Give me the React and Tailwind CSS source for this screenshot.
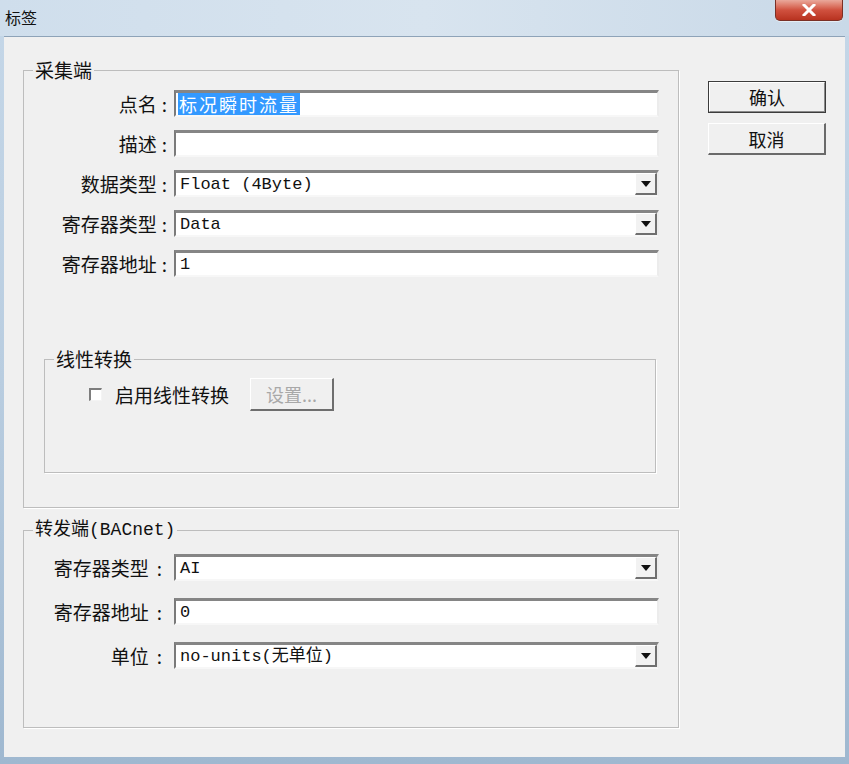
import React from "react";

const CJK = { fontFamily: '"Noto Sans CJK SC", "Noto Sans", sans-serif' };
const MONO = { fontFamily: '"Liberation Mono", "Noto Sans CJK SC", monospace' };

// label text with a detached colon, like the dialog font renders it
function Label({ text, width, colonGap, pr }) {
  return (
    <div className="text-[19px] text-right text-[#111] leading-none shrink-0" style={{ ...CJK, width, paddingRight: pr }}>
      {text}
      <span style={{ marginLeft: colonGap }}>:</span>
    </div>
  );
}

function TextBox({ children }) {
  return (
    <div className="flex-1 h-[27px] bg-white border-2 border-t-[3px] border-t-[#858585] border-l-[#7a7a7a] border-b-[#f7f7f7] border-r-[#ececec] flex items-center pl-[2px] overflow-hidden">
      {children}
    </div>
  );
}

function ComboBox({ value }) {
  return (
    <div className="flex-1 h-[27px] bg-white border-2 border-t-[3px] border-t-[#858585] border-l-[#7a7a7a] border-b-[#f7f7f7] border-r-[#ececec] flex items-stretch">
      <div className="flex-1 flex items-center pl-[4px] text-[17px] text-[#111] leading-none" style={MONO}>
        {value}
      </div>
      <div className="w-[22px] bg-[#f2f2f2] border-t border-l border-[#ffffff] border-r-2 border-b-2 border-r-[#6f6f6f] border-b-[#6f6f6f] flex items-center justify-center">
        <svg width="10" height="6" viewBox="0 0 10 6">
          <path d="M0 0 L10 0 L5 6 Z" fill="#111" />
        </svg>
      </div>
    </div>
  );
}

function GroupBox({ title, className, children, titleStyle = CJK, titleSize = "text-[19px]" }) {
  return (
    <fieldset className={`border border-[#bdbdbd] shadow-[1px_1px_0_#ffffff] ${className}`}>
      <legend className={`ml-[9px] px-[2px] ${titleSize} leading-[18px] text-[#111]`} style={titleStyle}>
        {title}
      </legend>
      {children}
    </fieldset>
  );
}

function Row({ label, labelWidth, gap, colonGap, pr, children }) {
  return (
    <div className="flex items-center h-[27px]" style={{ gap }}>
      <Label text={label} width={labelWidth} colonGap={colonGap} pr={pr} />
      {children}
    </div>
  );
}

export default function App() {
  return (
    <div className="w-[849px] h-[764px] overflow-hidden bg-gradient-to-b from-[#c5d7e8] via-[#b9cde0] to-[#9fb8d0] flex flex-col">
      {/* title bar */}
      <div className="h-[36px] flex justify-between shrink-0 bg-gradient-to-r from-[#cfdeec] via-[#d8e4ef] to-[#c9d9e8]">
        <div className="pl-[5px] pt-[8px] text-[16px] leading-[18px] text-[#111]" style={CJK}>
          标签
        </div>
        <div className="mr-[6px] w-[68px] h-[21px] rounded-b-[5px] border border-t-0 border-[#7a3026] bg-gradient-to-b from-[#e9a89b] via-[#d0513f] to-[#b8321f] flex items-center justify-center shadow-[0_1px_0_#ffffff80]">
          <svg width="14" height="12" viewBox="0 0 14 12">
            <path d="M2 1 L12 11 M12 1 L2 11" stroke="#ffffff" strokeWidth="3" strokeLinecap="square" />
          </svg>
        </div>
      </div>

      {/* client area */}
      <div className="mx-[4px] h-[721px] bg-[#f0f0f0] border-t border-[#8ea3b8] flex pl-[19px]">
        <div className="w-[656px] pt-[24px] flex flex-col">
          <GroupBox title="采集端" className="h-[447px]">
            <div className="pt-[11px] pr-[19px] flex flex-col gap-[13px]">
              <Row label="点名" labelWidth={146} gap={4} colonGap={5} pr={3}>
                <TextBox>
                  <span className="bg-[#3399ff] text-white text-[18px] leading-[22px] tracking-[2px] px-[1px]" style={CJK}>
                    标况瞬时流量
                  </span>
                </TextBox>
              </Row>
              <Row label="描述" labelWidth={146} gap={4} colonGap={5} pr={3}>
                <TextBox />
              </Row>
              <Row label="数据类型" labelWidth={146} gap={4} colonGap={5} pr={3}>
                <ComboBox value="Float (4Byte)" />
              </Row>
              <Row label="寄存器类型" labelWidth={146} gap={4} colonGap={5} pr={3}>
                <ComboBox value="Data" />
              </Row>
              <Row label="寄存器地址" labelWidth={146} gap={4} colonGap={5} pr={3}>
                <TextBox>
                  <span className="pl-[2px] text-[17px] leading-none text-[#111]" style={MONO}>1</span>
                </TextBox>
              </Row>
            </div>

            <div className="pl-[20px] pt-[73px]">
              <GroupBox title="线性转换" className="w-[612px] h-[123px]">
                <div className="pt-[10px] pl-[44px] flex items-center">
                  <div className="w-[13px] h-[13px] bg-white border-t-2 border-l-2 border-[#7d7d7d] border-b border-r border-b-[#f4f4f4] border-r-[#f4f4f4]" />
                  <span className="ml-[13px] text-[19px] leading-none text-[#111]" style={CJK}>
                    启用线性转换
                  </span>
                  <div className="ml-[21px] w-[84px] h-[33px] border border-t-[#ffffff] border-l-[#ffffff] border-b-2 border-r-2 border-b-[#6e6e6e] border-r-[#6e6e6e] flex items-center justify-center text-[18px] text-[#a8a8a8] leading-none" style={CJK}>
                    设置...
                  </div>
                </div>
              </GroupBox>
            </div>
          </GroupBox>

          <GroupBox title="转发端(BACnet)" className="mt-[13px] h-[207px]" titleStyle={MONO} titleSize="text-[18px]">
            <div className="pt-[15px] pr-[19px] flex flex-col gap-[17px]">
              <Row label="寄存器类型" labelWidth={142} gap={8} colonGap={8} pr={4}>
                <ComboBox value="AI" />
              </Row>
              <Row label="寄存器地址" labelWidth={142} gap={8} colonGap={8} pr={4}>
                <TextBox>
                  <span className="pl-[2px] text-[17px] leading-none text-[#111]" style={MONO}>0</span>
                </TextBox>
              </Row>
              <Row label="单位" labelWidth={142} gap={8} colonGap={8} pr={4}>
                <ComboBox value="no-units(无单位)" />
              </Row>
            </div>
          </GroupBox>
        </div>

        <div className="ml-[29px] pt-[44px] flex flex-col gap-[10px]">
          <div className="w-[118px] h-[32px] border border-[#3c3c3c] flex">
            <div className="flex-1 border border-t-[#ffffff] border-l-[#ffffff] border-b-[#8a8a8a] border-r-[#8a8a8a] flex items-center justify-center text-[18px] leading-none text-[#111]" style={CJK}>
              确认
            </div>
          </div>
          <div className="w-[118px] h-[32px] border border-t-[#ffffff] border-l-[#ffffff] border-b-2 border-r-2 border-b-[#6a6a6a] border-r-[#6a6a6a] flex items-center justify-center text-[18px] leading-none text-[#111]" style={CJK}>
            取消
          </div>
        </div>
      </div>
    </div>
  );
}
